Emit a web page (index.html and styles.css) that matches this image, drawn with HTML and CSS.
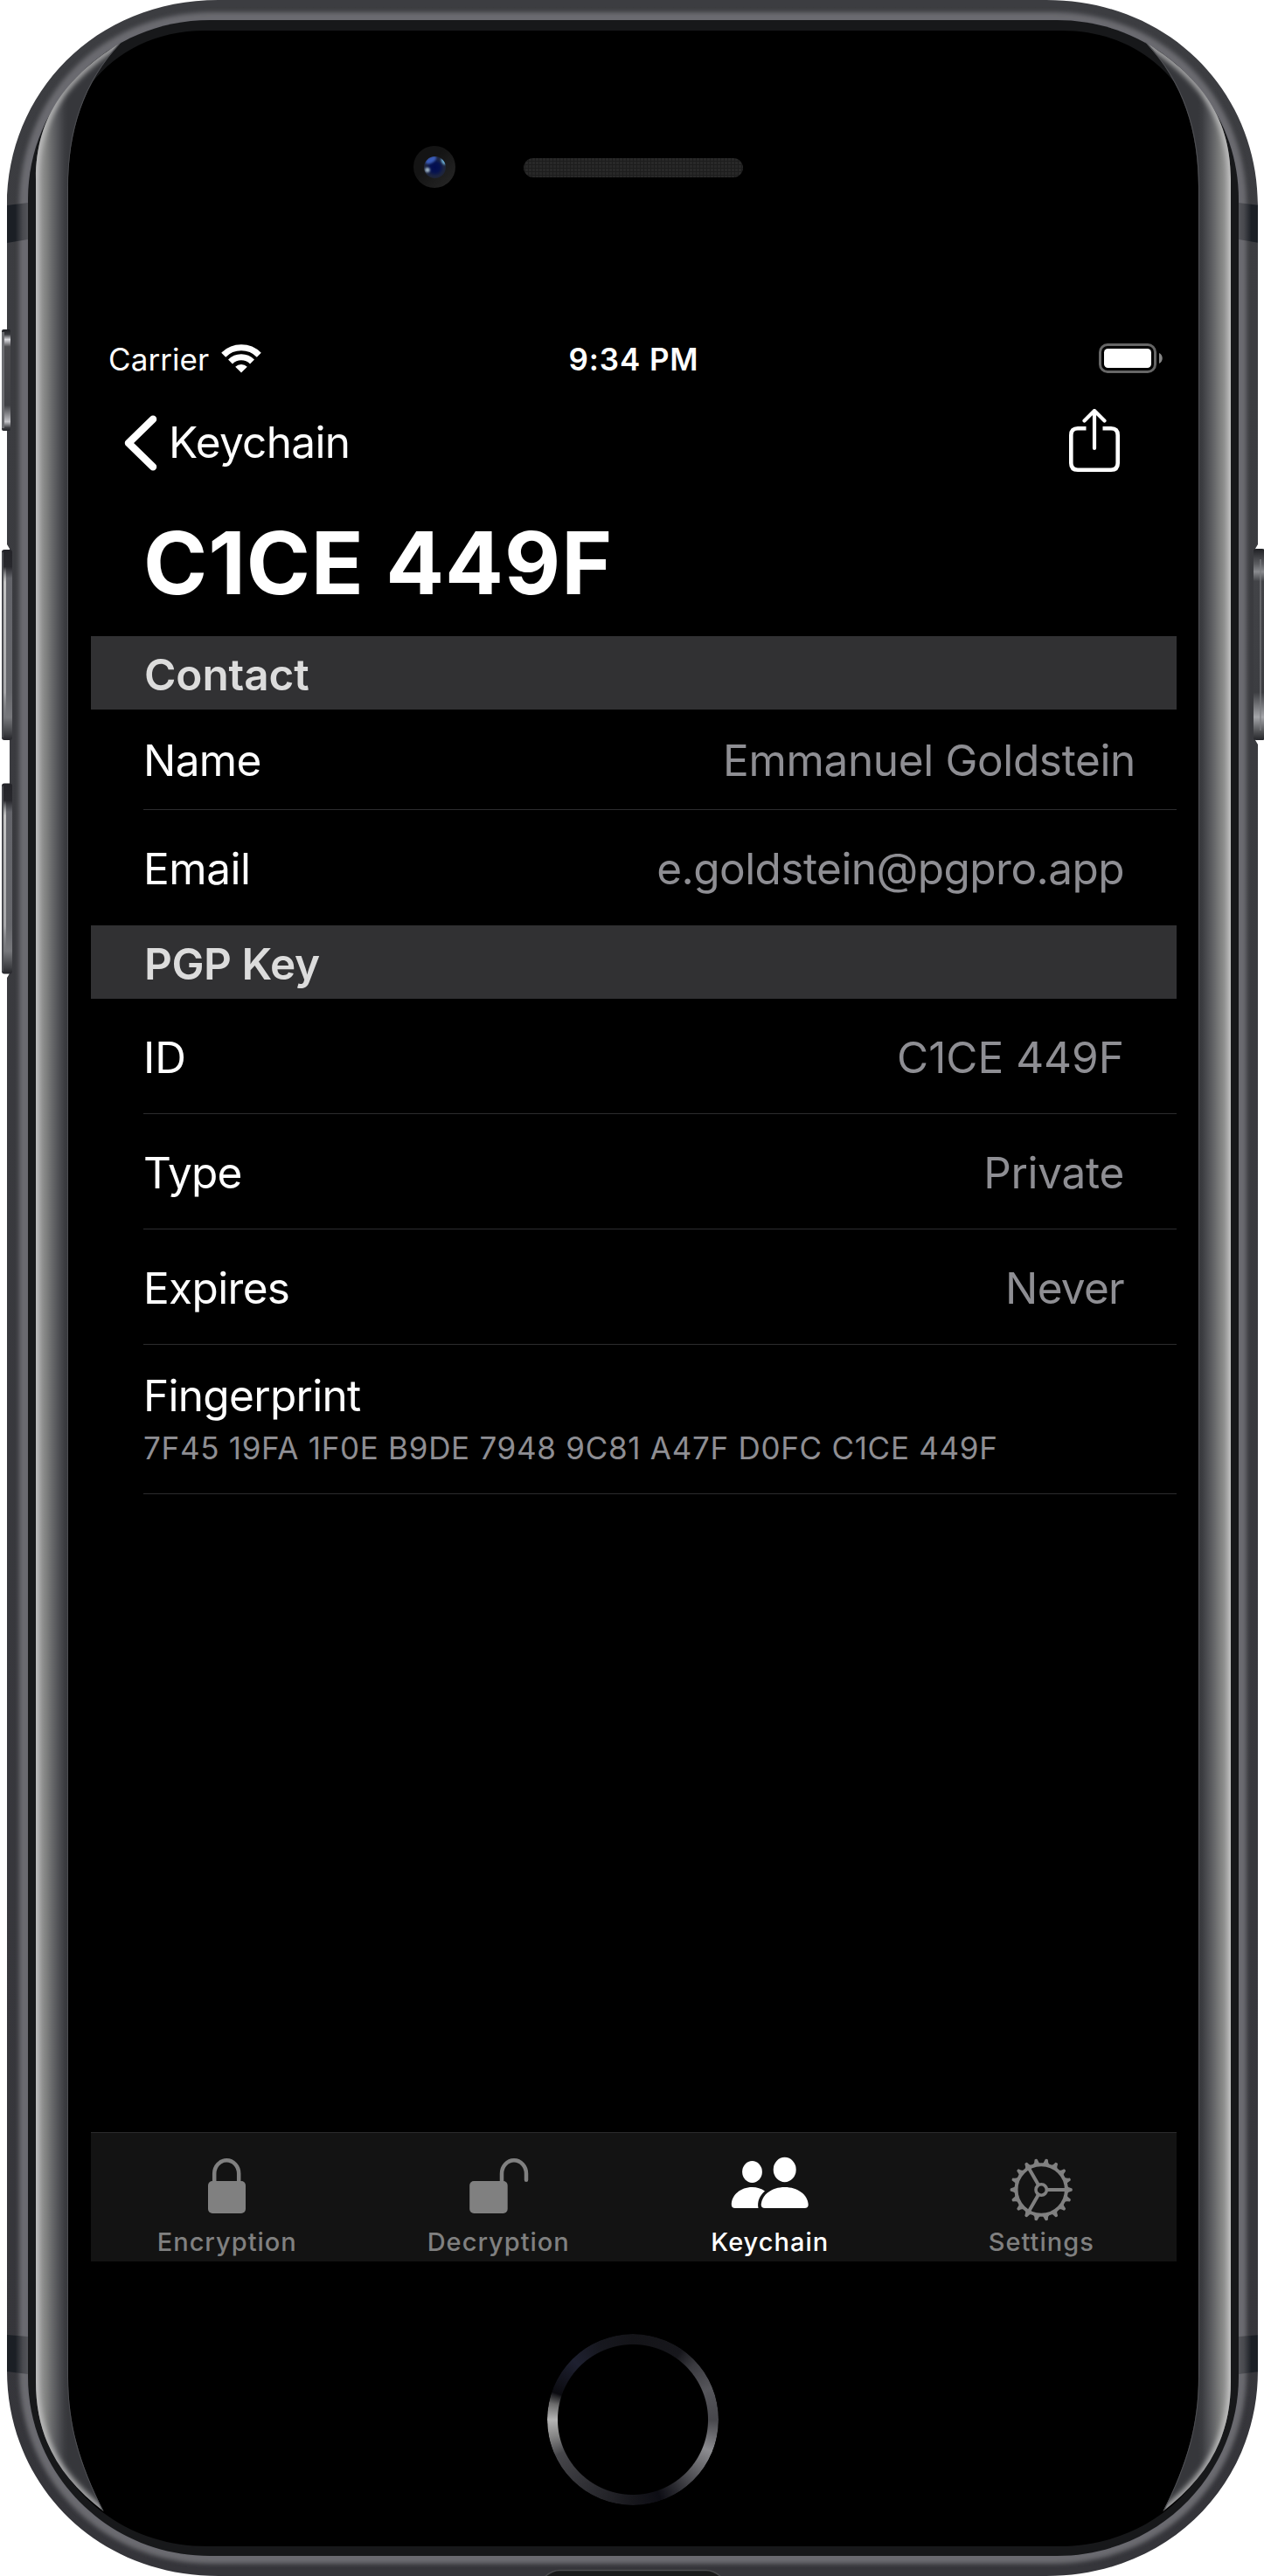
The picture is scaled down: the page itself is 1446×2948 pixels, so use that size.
FILE: index.html
```html
<!DOCTYPE html>
<html lang="en">
<head>
<meta charset="utf-8">
<title>PGPro – Keychain</title>
<link rel="stylesheet" href="styles.css">
</head>
<body>
<div class="device">
  <svg class="frame" width="1446" height="2948" viewBox="0 0 1446 2948" aria-hidden="true">
    <defs>
      <linearGradient id="chrome" gradientUnits="userSpaceOnUse" x1="41" x2="78" y1="0" y2="0">
        <stop offset="0" stop-color="#a8a8a8"/><stop offset=".12" stop-color="#949494"/><stop offset=".3" stop-color="#838483"/>
        <stop offset=".5" stop-color="#68696b"/><stop offset=".68" stop-color="#525357"/><stop offset=".88" stop-color="#3c3d41"/><stop offset="1" stop-color="#36373b"/>
      </linearGradient>
      <linearGradient id="edge" x1="0" x2="0" y1="0" y2="1">
        <stop offset="0" stop-color="#3c3d41"/><stop offset="1" stop-color="#35353a"/>
      </linearGradient>
      <linearGradient id="band" x1="0" x2="1" y1="0" y2="0">
        <stop offset=".4" stop-color="#1b1f25"/><stop offset=".75" stop-color="#48494e"/><stop offset="1" stop-color="#54555a"/>
      </linearGradient>
      <linearGradient id="mute" x1="0" x2="0" y1="0" y2="1">
        <stop offset="0" stop-color="#1f2024"/><stop offset=".05" stop-color="#3a3b3f"/><stop offset=".1" stop-color="#dcdce0"/><stop offset=".17" stop-color="#4b4b4e"/>
        <stop offset=".75" stop-color="#404145"/><stop offset=".91" stop-color="#c4c4c8"/><stop offset=".97" stop-color="#3a3b3f"/><stop offset="1" stop-color="#242529"/>
      </linearGradient>
      <linearGradient id="key" x1="0" x2="0" y1="0" y2="1">
        <stop offset="0" stop-color="#242429"/><stop offset=".09" stop-color="#28282d"/><stop offset=".15" stop-color="#63646a"/>
        <stop offset=".75" stop-color="#66676c"/><stop offset=".88" stop-color="#77787c"/><stop offset=".97" stop-color="#3c3d41"/><stop offset="1" stop-color="#242429"/>
      </linearGradient>
      <linearGradient id="shine" x1="0" x2="0" y1="0" y2="1">
        <stop offset=".09" stop-color="#c4c4c4" stop-opacity="0"/><stop offset=".17" stop-color="#c4c4c4"/>
        <stop offset=".75" stop-color="#a6a6a9"/><stop offset=".88" stop-color="#8a8b8e" stop-opacity="0"/>
      </linearGradient>
      <linearGradient id="power" x1="0" x2="0" y1="0" y2="1">
        <stop offset="0" stop-color="#1f2024"/><stop offset=".08" stop-color="#5c5d61"/><stop offset=".12" stop-color="#8a8b8f"/><stop offset=".17" stop-color="#424347"/>
        <stop offset=".75" stop-color="#3c3d41"/><stop offset=".88" stop-color="#a4a5a9"/><stop offset=".96" stop-color="#4c4d50"/><stop offset="1" stop-color="#242529"/>
      </linearGradient>
      <linearGradient id="camera" x1="0" x2="1" y1="0" y2="1">
        <stop offset=".4" stop-color="#141414"/><stop offset="1" stop-color="#282828"/>
      </linearGradient>
      <radialGradient id="lens">
        <stop offset="0" stop-color="#020c50"/><stop offset=".45" stop-color="#06124f"/><stop offset=".8" stop-color="#1c2440"/><stop offset="1" stop-color="#1e2437"/>
      </radialGradient>
      <pattern id="mesh" width="4" height="4" patternUnits="userSpaceOnUse">
        <rect width="4" height="4" fill="#282828"/><path d="M0 .5h4M.5 0v4" stroke="#1d1d1d"/>
      </pattern>
      <filter id="soft" x="-5%" y="-5%" width="110%" height="110%"><feGaussianBlur stdDeviation="2.6"/></filter>
      <filter id="glow" filterUnits="userSpaceOnUse" x="0" y="0" width="1446" height="2948"><feGaussianBlur stdDeviation="3"/></filter>
      <filter id="spot" x="-50%" y="-50%" width="200%" height="200%"><feGaussianBlur stdDeviation="1.3"/></filter>
      <clipPath id="bodyClip"><path id="body" d="M8 235C8 107 108 0 250 0H1197C1339 0 1439 107 1439 235V623L1436 628V847L1439 852V2713C1439 2841 1339 2948 1197 2948H250C108 2948 8 2841 8 2713V1119L11 1114V628L8 623Z"/></clipPath>
      <clipPath id="rimClip"><path id="rimShape" d="M41 205C41 130 80 85 139 48C95 95 78 150 78 215V2720C78 2780 94 2825 118.5 2874C68 2835 41 2790 41 2725Z"/></clipPath>
      <clipPath id="lensClip"><circle cx="497.5" cy="191.5" r="12.5"/></clipPath>
      <g id="rim">
        <use href="#rimShape" fill="url(#chrome)"/>
        <g clip-path="url(#rimClip)">
          <path d="M118.5 2874C68 2835 41 2790 41 2725V205C41 130 80 85 139 48" fill="none" stroke="#c6c6c6" stroke-width="6" filter="url(#glow)"/>
          <path d="M139 48C95 95 78 150 78 215V2720C78 2780 94 2825 118.5 2874" fill="none" stroke="#4e4f53" stroke-width="2"/>
        </g>
      </g>
    </defs>
    <use href="#body" fill="url(#edge)"/>
    <g clip-path="url(#bodyClip)">
      <path d="M22 235C22 114 112 14 245 14H1202C1335 14 1426 114 1426 235V2713C1426 2834 1335 2934 1202 2934H245C112 2934 22 2834 22 2713Z" fill="#6a6b6f" filter="url(#soft)"/>
      <path d="M8 235L32 232V274L8 278Z" fill="url(#band)"/>
      <path d="M8 2672L32 2674V2717L8 2714Z" fill="url(#band)"/>
      <g transform="matrix(-1 0 0 1 1449 0)">
        <path d="M8 235L32 232V274L8 278Z" fill="url(#band)"/>
        <path d="M8 2672L32 2674V2717L8 2714Z" fill="url(#band)"/>
      </g>
      <path d="M622 2950Q631 2941.500 640 2941.500H808Q817 2941.500 826 2950Z" fill="#191a1a" stroke="#4a4b4d" stroke-width="1.500"/>
    </g>
    <path d="M32 228C32 117 123 23 240 23H1209C1326 23 1417 117 1417 228V2720C1417 2831 1326 2925 1209 2925H240C123 2925 32 2831 32 2720Z" fill="#17181a"/>
    <path d="M60 235C60 130 120 35 235 35H1214C1329 35 1389 130 1389 235L1408 2720C1408 2825 1326 2914 1212 2914H237C123 2914 41 2825 41 2720Z" fill="#000"/>
    <use href="#rim"/>
    <use href="#rim" transform="matrix(-1 0 0 1 1449 0)"/>

    <rect x="2" y="377" width="10" height="116" rx="2" fill="url(#mute)"/>
    <rect x="2" y="380" width="3" height="110" fill="#6c6d71"/>
    <g id="volume">
      <rect x="2" y="629" width="12" height="218" rx="3" fill="url(#key)"/>
      <rect x="2" y="632" width="2" height="212" fill="#4a4b50"/>
      <rect x="4" y="629" width="3" height="218" fill="url(#shine)"/>
    </g>
    <use href="#volume" y="267.500"/>
    <rect x="1434" y="628" width="13" height="219" rx="3" fill="url(#power)"/>
    <rect x="1441" y="640" width="2" height="196" fill="#7c7d81" opacity=".6"/>

    <circle cx="497" cy="191" r="24" fill="url(#camera)"/>
    <circle cx="497.500" cy="191.500" r="12.500" fill="url(#lens)"/>
    <g clip-path="url(#lensClip)">
      <ellipse cx="493" cy="183" rx="7" ry="3.500" transform="rotate(-30 493 183)" fill="#3a5cb8" filter="url(#spot)"/>
      <ellipse cx="507.500" cy="185" rx="2" ry="4" transform="rotate(-30 507 185)" fill="#74bde8" filter="url(#spot)"/>
      <circle cx="489" cy="194.500" r="2.800" fill="#9cb2c4" filter="url(#spot)"/>
    </g>
    <rect x="599" y="181" width="251" height="22" rx="11" fill="url(#mesh)"/>
  </svg>

  <main class="screen">
    <div class="status">
      <div class="status-left">
        <span class="carrier">Carrier</span>
        <svg width="46" height="34" viewBox="0 0 46 34" fill="none" stroke="#fff" stroke-width="7">
          <path d="M2.700 13.200A28.700 28.700 0 0 1 43.300 13.200"/><path d="M10.500 21A17.700 17.700 0 0 1 35.500 21"/>
          <path d="M23 33.500L16.200 26.700A9.600 9.600 0 0 1 29.800 26.700Z" fill="#fff" stroke="none"/>
        </svg>
      </div>
      <span class="time">9:34 PM</span>
      <svg class="battery" width="73" height="34" viewBox="0 0 73 34">
        <rect x="1.500" y="1.500" width="63" height="31" rx="8.500" fill="none" stroke="#666" stroke-width="3"/>
        <rect x="6" y="6" width="54" height="22" rx="4.500" fill="#fff"/><path d="M69 11C74 13 74 21 69 23Z" fill="#858585"/>
      </svg>
    </div>

    <nav class="nav">
      <a class="back">
        <svg width="38" height="64" viewBox="0 0 38 64"><path d="M33 4.800L5 32L33 59.200" fill="none" stroke="#fff" stroke-width="8.500" stroke-linecap="round" stroke-linejoin="round"/></svg>
        <span class="back-text">Keychain</span>
      </a>
      <svg class="share" width="58" height="74" viewBox="0 0 58 74" fill="none" stroke="#fff" stroke-width="4.600">
        <path d="M19.500 22.300H10Q2.300 22.300 2.300 30V62Q2.300 69.700 10 69.700H48Q55.700 69.700 55.700 62V30Q55.700 22.300 48 22.300H38.500"/>
        <path d="M29 2.500V45M17.500 13.500L29 2L40.500 13.500" stroke-width="4.200" stroke-linecap="round" stroke-linejoin="round"/>
      </svg>
    </nav>

    <h1 class="title">C1CE 449F</h1>

    <h2 class="section">Contact</h2>
    <div class="row row-name"><span class="label l-tight">Name</span><span class="value v-name">Emmanuel Goldstein</span></div>
    <div class="row row-last"><span class="label">Email</span><span class="value v-email">e.goldstein@pgpro.app</span></div>

    <h2 class="section section-key">PGP Key</h2>
    <div class="row"><span class="label l-id">ID</span><span class="value">C1CE 449F</span></div>
    <div class="row"><span class="label l-type">Type</span><span class="value v-private">Private</span></div>
    <div class="row"><span class="label l-tight">Expires</span><span class="value v-never">Never</span></div>
    <div class="fingerprint">
      <div class="label l-print">Fingerprint</div>
      <div class="print">7F45 19FA 1F0E B9DE 7948 9C81 A47F D0FC C1CE 449F</div>
    </div>

    <footer class="tabs">
      <div class="tab">
        <svg width="96" height="80" viewBox="0 0 96 80"><rect x="27" y="36" width="43" height="37" rx="5" fill="currentColor"/><path d="M34.200 38V27.500a14 15.200 0 0 1 28 0V38" fill="none" stroke="currentColor" stroke-width="4.500"/></svg>
        <span>Encryption</span>
      </div>
      <div class="tab">
        <svg width="96" height="80" viewBox="0 0 96 80"><rect x="15.200" y="36" width="43.500" height="37" rx="5" fill="currentColor"/><path d="M52 38V27.500a14 15.200 0 0 1 28 0V34.800" fill="none" stroke="currentColor" stroke-width="4.500" stroke-linecap="round"/></svg>
        <span>Decryption</span>
      </div>
      <div class="tab active">
        <svg width="96" height="80" viewBox="0 0 96 80" fill="currentColor">
          <ellipse cx="28.500" cy="25.500" rx="11.400" ry="12.500"/><ellipse cx="65.700" cy="23" rx="13" ry="14.200"/>
          <path d="M9 67Q4.800 67 4.800 63C5 52 15 43 28.500 43C34 43 39 44.500 43 47.500C37 52.500 34 60 35.500 67Z"/>
          <path d="M43 67Q38.700 67 38.700 63C39.500 51.500 51 43 65.700 43S92 51.500 92.700 63Q92.700 67 88.500 67Z"/>
        </svg>
        <span>Keychain</span>
      </div>
      <div class="tab">
        <svg width="96" height="80" viewBox="0 0 96 80">
          <defs>
            <path id="tooth" d="M28.500 -5.200Q31 -2 35.200 -1.500Q36.200 0 35.200 1.500Q31 2 28.500 5.200Z"/>
            <g id="teeth"><use href="#tooth"/><use href="#tooth" transform="rotate(20)"/><use href="#tooth" transform="rotate(40)"/></g>
          </defs>
          <g transform="translate(48.200 46)" fill="currentColor">
            <use href="#teeth"/><use href="#teeth" transform="rotate(60)"/><use href="#teeth" transform="rotate(120)"/>
            <use href="#teeth" transform="rotate(180)"/><use href="#teeth" transform="rotate(240)"/><use href="#teeth" transform="rotate(300)"/>
            <g fill="none" stroke="currentColor">
              <circle r="28.700" stroke-width="4"/><circle r="6.200" stroke-width="3.600"/>
              <path d="M7 0H28M-3.500 -6L-14 -24.300M-3.500 6L-14 24.300" stroke-width="4"/>
            </g>
          </g>
        </svg>
        <span>Settings</span>
      </div>
    </footer>
  </main>
  <div class="home"></div>
</div>
</body>
</html>
```
FILE: styles.css
```css
* { box-sizing: border-box; }

body {
  margin: 0;
  background: #fff;
  font-family: Inter, "Liberation Sans", sans-serif;
  color: #fff;
}

.device {
  position: relative;
  width: 1446px;
  height: 2948px;
  padding: 380px 100px 0 104px;
  overflow: hidden;
}

/* phone hardware, drawn behind the screen */
.frame {
  position: absolute;
  left: 0;
  top: 0;
}

.screen {
  position: relative;
  display: flex;
  flex-direction: column;
  width: 1242px;
  height: 2208px;
  background: #000;
}

.status {
  display: grid;
  grid-template-columns: 1fr auto 1fr;
  align-items: center;
  height: 60px;
  padding: 2px 16px 0 20px;
  font-size: 35px;
  line-height: 42px;
}
.status-left { display: flex; align-items: center; gap: 14px; }
.status-left svg { margin-top: -3px; }
.carrier { letter-spacing: 0.08px; }
.time { margin: 0 -2px 0 -6px; font-weight: 600; letter-spacing: 0.9px; }
.battery { justify-self: end; margin-top: -2px; }

.nav {
  display: flex;
  align-items: center;
  justify-content: space-between;
  height: 132px;
  padding: 0 65px 0 38px;
}
.back { display: flex; align-items: center; gap: 13px; }
.back svg { margin-top: 1px; }
.back-text { font-size: 49.5px; line-height: 60px; letter-spacing: -0.65px; }
.share { margin-top: -2px; }

.title {
  height: 156px;
  margin: 0;
  padding-left: 60px;
  font-size: 99px;
  line-height: 144px;
  font-weight: 700;
  letter-spacing: 0.9px;
}

.section {
  height: 84px;
  margin: 0;
  padding-left: 61px;
  background: #313133;
  color: #dcdcdc;
  font-size: 49.5px;
  line-height: 88px;
  font-weight: 600;
  letter-spacing: -0.1px;
}
.section-key { letter-spacing: -0.45px; }

.row {
  display: flex;
  align-items: center;
  justify-content: space-between;
  height: 132px;
  margin-left: 60px;
  padding: 2px 60px 0 0;
  border-bottom: 1px solid #2c2c2e;
  font-size: 49.5px;
  line-height: 60px;
}
.row-name { height: 115px; padding: 2px 47px 0 0; }
.row-last { border-bottom-color: transparent; }

.label { letter-spacing: -0.45px; }
.l-tight { letter-spacing: -0.65px; }
.l-id { letter-spacing: 0; }
.l-type { letter-spacing: -0.83px; }
.l-print { letter-spacing: -0.7px; }

.value { color: #8e8e93; }
.v-name { letter-spacing: -0.36px; }
.v-email { letter-spacing: -0.55px; }
.v-private { letter-spacing: -0.3px; }
.v-never { letter-spacing: -0.72px; }

.fingerprint {
  height: 171px;
  margin-left: 60px;
  padding-top: 28px;
  border-bottom: 1px solid #2c2c2e;
  font-size: 49.5px;
  line-height: 60px;
}
.print {
  margin-top: 8px;
  color: #8e8e93;
  font-size: 35px;
  line-height: 44px;
  letter-spacing: 0.71px;
  white-space: nowrap;
}

.tabs {
  display: flex;
  height: 148px;
  margin-top: auto;
  border-top: 1px solid #2b2b2c;
  background: #131313;
}
.tab {
  display: flex;
  flex: 1;
  flex-direction: column;
  align-items: center;
  padding-top: 19px;
  color: #808080;
  font-size: 29px;
  line-height: 36px;
  font-weight: 500;
  letter-spacing: 1px;
}
.tab svg { height: 80px; overflow: visible; }
.tab span { margin-top: 8px; padding-left: 1px; }
.tab.active { color: #fff; }

.home {
  position: relative;
  width: 196px;
  height: 196px;
  margin: 83px 0 0 522px;
  border-radius: 50%;
  background: conic-gradient(#141418, #17171c 35deg, #3a3a3f 48deg, #56565b 68deg, #47474c 90deg, #8c8c90 112deg, #5c5c60 130deg, #2a2a30 148deg, #0d0d14 161deg, #17171c 180deg, #2f2f34 215deg, #47474b 245deg, #858585 258deg, #b4b4b4 270deg, #6c6c6c 281deg, #0b0b10 289deg, #1e2030 315deg, #17181f 335deg, #141418);
  -webkit-mask: radial-gradient(circle, transparent 85.5px, #000 86.5px);
  mask: radial-gradient(circle, transparent 85.5px, #000 86.5px);
}
```
